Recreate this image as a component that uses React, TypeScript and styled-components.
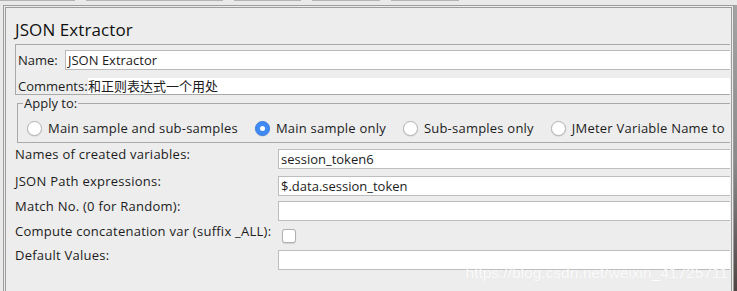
import React from "react";
import styled, { createGlobalStyle } from "styled-components";

const GlobalStyle = createGlobalStyle`
    html, body {
        margin: 0;
        padding: 0;
        background: #ececec;
    }
    body {
        font-family: "Open Sans", "Noto Sans CJK SC", sans-serif;
    }
`;

const tabEdges = [75, 137, 67, 68, 68];

const options = [
    { label: "Main sample and sub-samples", checked: false },
    { label: "Main sample only", checked: true },
    { label: "Sub-samples only", checked: false },
    { label: "JMeter Variable Name to", checked: false },
];

interface FieldRow {
    label: string;
    value?: string;
    kind: "text" | "check";
}

const fields: FieldRow[] = [
    { label: "Names of created variables:", value: "session_token6", kind: "text" },
    { label: "JSON Path expressions:", value: "$.data.session_token", kind: "text" },
    { label: "Match No. (0 for Random):", value: "", kind: "text" },
    { label: "Compute concatenation var (suffix _ALL):", kind: "check" },
    { label: "Default Values:", value: "", kind: "text" },
];

export default function App() {
    return (
        <>
            <GlobalStyle />
            <Root>
                <TabStrip>
                    {tabEdges.map((w, i) => (
                        <TabEdge key={i} $w={w} />
                    ))}
                </TabStrip>
                <Window>
                    <Panel>
                        <Title>JSON Extractor</Title>
                        <NameBox>
                            <NameRow>
                                <InlineLabel $w={47}>Name:</InlineLabel>
                                <NameField>JSON Extractor</NameField>
                            </NameRow>
                            <CommentsRow>
                                <InlineLabel $w={70}>Comments:</InlineLabel>
                                <CommentsField>和正则表达式一个用处</CommentsField>
                            </CommentsRow>
                        </NameBox>
                        <ApplyBox>
                            <Legend>Apply to:</Legend>
                            <RadioRow>
                                {options.map((o) => (
                                    <RadioOption key={o.label}>
                                        <RadioDot $checked={o.checked} />
                                        <span>{o.label}</span>
                                    </RadioOption>
                                ))}
                            </RadioRow>
                        </ApplyBox>
                        <Form>
                            {fields.map((f) => (
                                <React.Fragment key={f.label}>
                                    <FieldLabel>{f.label}</FieldLabel>
                                    {f.kind === "text" ? (
                                        <TextField>{f.value}</TextField>
                                    ) : (
                                        <CheckCell>
                                            <CheckBox />
                                        </CheckCell>
                                    )}
                                </React.Fragment>
                            ))}
                        </Form>
                    </Panel>
                    <Edge />
                </Window>
                <Watermark>https://blog.csdn.net/weixin_41725711</Watermark>
            </Root>
        </>
    );
}

const Root = styled.div`
    position: relative;
    width: 737px;
    height: 291px;
    overflow: hidden;
    display: flex;
    flex-direction: column;
    background: #e9e9e9;
    color: #1c1c1c;
    font-size: 13px;
`;

const TabStrip = styled.div`
    height: 5px;
    display: flex;
    gap: 11px;
    align-items: flex-start;
`;

const TabEdge = styled.div<{ $w: number }>`
    width: ${(p) => p.$w}px;
    height: 1px;
    background: #b3b3b3;
`;

const Window = styled.div`
    flex: 1;
    display: flex;
    min-height: 0;
`;

const Panel = styled.div`
    margin-left: 3px;
    width: 731px;
    box-sizing: border-box;
    border: 3px double #9c9c9c;
    border-bottom: none;
    background: #ededed;
    padding: 0 1px 0 9px;
`;

const Edge = styled.div`
    flex: 1;
    background: linear-gradient(#a3a3a3, #8a8a8a 55%, #4f4444);
`;

const Title = styled.h1`
    margin: 10px 0 0;
    font-size: 17px;
    line-height: 24px;
    font-weight: 400;
    letter-spacing: 0.1px;
    color: #111;
`;

const NameBox = styled.div`
    margin-top: 2px;
    border: 1px solid #a9a9a9;
    border-right: none;
    padding: 5px 0 0 2px;
    display: flex;
    flex-direction: column;
`;

const NameRow = styled.div`
    display: flex;
    align-items: center;
    height: 20px;
`;

const InlineLabel = styled.div<{ $w: number }>`
    width: ${(p) => p.$w}px;
    flex: none;
    line-height: 16px;
`;

const NameField = styled.div`
    flex: 1;
    height: 20px;
    box-sizing: border-box;
    border: 1px solid #b9b9b9;
    border-right: none;
    background: #fff;
    padding-left: 2px;
    line-height: 18px;
`;

const CommentsRow = styled.div`
    margin-top: 8px;
    height: 16px;
    display: flex;
`;

const CommentsField = styled.div`
    flex: 1;
    background: #fff;
    line-height: 16px;
    white-space: nowrap;
`;

const ApplyBox = styled.fieldset`
    margin: 0 0 0 2px;
    border: 1px solid #a9a9a9;
    border-right: none;
    padding: 0 0 0 5px;
    min-width: 0;
`;

const Legend = styled.legend`
    padding: 0 1px;
    line-height: 16px;
    font-size: 13px;
`;

const RadioRow = styled.div`
    display: flex;
    align-items: center;
    gap: 17px;
    height: 16px;
    padding: 9px 0 6px 4px;
    white-space: nowrap;
    letter-spacing: 0.22px;
`;

const RadioOption = styled.label`
    display: flex;
    align-items: center;
    gap: 6px;
    line-height: 16px;
`;

const RadioDot = styled.span<{ $checked: boolean }>`
    position: relative;
    width: 15px;
    height: 15px;
    box-sizing: border-box;
    border-radius: 50%;
    flex: none;
    background: ${(p) => (p.$checked ? "#3f8af5" : "#fff")};
    border: 1px solid ${(p) => (p.$checked ? "#3a7fe4" : "#b4b4b4")};
    box-shadow: 0 0.5px 1px rgba(0, 0, 0, 0.15);

    &::after {
        content: "";
        display: ${(p) => (p.$checked ? "block" : "none")};
        position: absolute;
        left: 50%;
        top: 50%;
        width: 5px;
        height: 5px;
        margin: -2.5px 0 0 -2.5px;
        border-radius: 50%;
        background: #fff;
    }
`;

const Form = styled.div`
    margin-top: 6px;
    display: grid;
    grid-template-columns: 263px 1fr;
    grid-template-rows: 22px 20px 20px 19px 20px;
    row-gap: 5px;
`;

const FieldLabel = styled.div`
    line-height: 14px;
    margin-top: -2px;
    white-space: nowrap;
    letter-spacing: 0.25px;
`;

const TextField = styled.div`
    height: 20px;
    box-sizing: border-box;
    border: 1px solid #bdbdbd;
    border-right: none;
    background: #fff;
    padding-left: 2px;
    line-height: 18px;
    white-space: nowrap;
    overflow: hidden;
`;

const CheckCell = styled.div`
    display: flex;
    align-items: center;
    padding-left: 4px;
`;

const CheckBox = styled.span`
    width: 14px;
    height: 14px;
    box-sizing: border-box;
    border: 1px solid #b0b0b0;
    border-radius: 3px;
    background: #fff;
    box-shadow: 0 0.5px 1px rgba(0, 0, 0, 0.12);
`;

const Watermark = styled.div`
    position: absolute;
    right: 9px;
    bottom: 9px;
    font-family: "Liberation Sans", Arial, sans-serif;
    font-size: 15.5px;
    color: rgba(255, 255, 255, 0.9);
    text-shadow: 0 0 1px rgba(0, 0, 0, 0.06);
    pointer-events: none;
`;
